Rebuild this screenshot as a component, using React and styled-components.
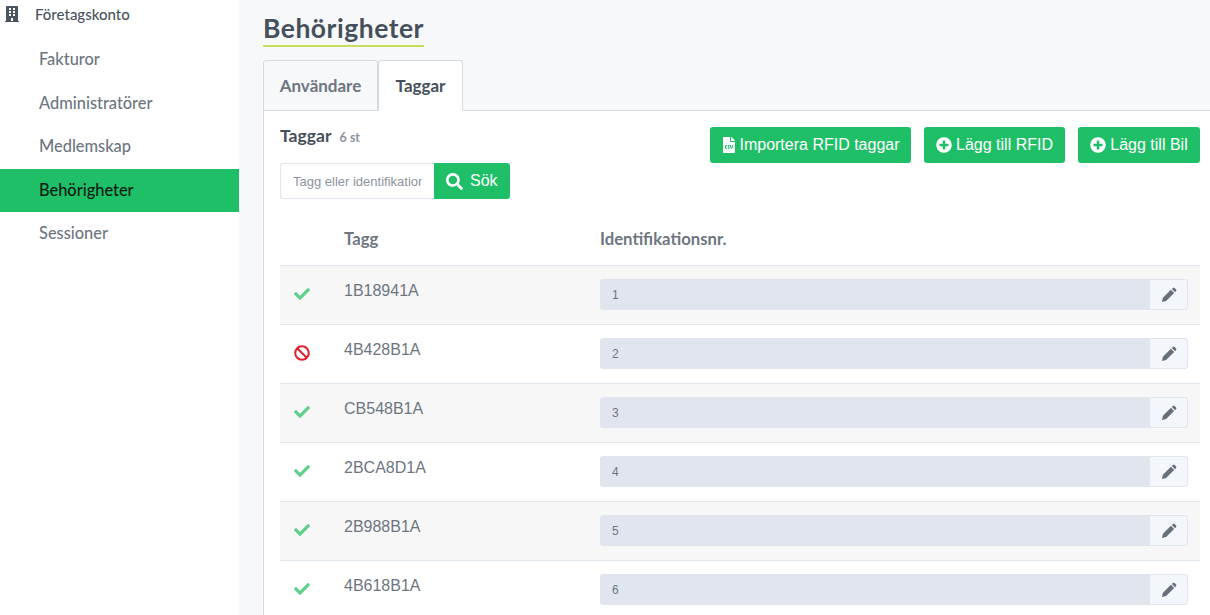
import React from 'react';
import styled, { createGlobalStyle } from 'styled-components';
import { FaBuilding, FaCheck, FaBan, FaSearch, FaPlusCircle, FaFileCsv } from 'react-icons/fa';

const GlobalStyle = createGlobalStyle`
  html, body {
    margin: 0;
    height: 615px;
    overflow: hidden;
    background: #f7f8f9;
    font-family: "Liberation Sans", Arial, sans-serif;
  }
  * { box-sizing: border-box; }
`;

const Page = styled.div`
  display: flex;
  height: 615px;
`;

const Sidebar = styled.nav`
  width: 239px;
  flex: none;
  background: #fff;
`;

const SideTitle = styled.div`
  display: flex;
  align-items: center;
  height: 28px;
  padding-left: 5px;
  font: 500 15px Lato, sans-serif;
  color: #4a5560;

  svg {
    width: 14px;
    height: 16px;
    margin-right: 16px;
    margin-top: -1px;
    color: #4a5560;
  }
`;

const SideList = styled.div`
  margin-top: 10px;
`;

const SideItem = styled.div`
  height: 43.5px;
  display: flex;
  align-items: center;
  padding: 0 0 2px 39px;
  font: 500 16.4px Lato, sans-serif;
  color: ${p => (p.$active ? '#0b1a12' : '#6d7680')};
  background: ${p => (p.$active ? '#1fbf68' : 'transparent')};
`;

const Main = styled.main`
  flex: 1;
  min-width: 0;
  padding: 14px 0 0 24px;
`;

const Title = styled.h1`
  display: inline-block;
  margin: 0;
  height: 33px;
  font: 700 26.5px/29px Lato, sans-serif;
  color: #46505c;
  letter-spacing: 0.5px;
  border-bottom: 2px solid #c8dd5c;
`;

const Tabs = styled.div`
  display: flex;
  margin-top: 13px;
  height: 51px;
  position: relative;
  z-index: 1;
`;

const Tab = styled.div`
  display: flex;
  align-items: center;
  justify-content: center;
  width: ${p => p.$width}px;
  height: 51px;
  font: 700 17px Lato, sans-serif;
  color: ${p => (p.$active ? '#46505c' : '#6d7680')};
  background: ${p => (p.$active ? '#fff' : '#f7f8f9')};
  border: 1px solid #d5dae2;
  border-bottom-color: ${p => (p.$active ? '#fff' : '#d5dae2')};
  border-radius: 3px 3px 0 0;
`;

const Panel = styled.section`
  margin-top: -1px;
  height: 510px;
  background: #fff;
  border: 1px solid #d5dae2;
  border-right: 0;
  padding: 0 10px 0 16px;
`;

const Top = styled.div`
  display: flex;
  justify-content: space-between;
  height: 104px;
`;

const SearchArea = styled.div`
  padding-top: 14px;
`;

const CountLine = styled.div`
  display: flex;
  align-items: baseline;
  height: 38px;
  font: 700 17.6px Lato, sans-serif;
  color: #46505c;
`;

const Count = styled.span`
  margin-left: 8px;
  font-size: 12.5px;
  color: #8b949e;
`;

const Search = styled.div`
  display: flex;
  height: 36px;
`;

const SearchInput = styled.input`
  width: 154px;
  height: 36px;
  padding: 0 12px;
  font: 13px "Liberation Sans", Arial, sans-serif;
  color: #6d7680;
  background: #fff;
  border: 1px solid #dfe5ec;
  border-right: 0;
  border-radius: 3px 0 0 3px;
  outline: none;

  &::placeholder {
    color: #8b949e;
    opacity: 1;
  }
`;

const SearchButton = styled.button`
  display: flex;
  align-items: center;
  gap: 7px;
  width: 76px;
  height: 36px;
  padding: 0 12px;
  font: 16px "Liberation Sans", Arial, sans-serif;
  color: #fff;
  background: #1fbf68;
  border: 0;
  border-radius: 0 3px 3px 0;

  svg {
    width: 17px;
    height: 17px;
  }
`;

const Actions = styled.div`
  display: flex;
  gap: 13px;
  padding-top: 16px;
`;

const ActionButton = styled.button`
  display: flex;
  align-items: center;
  justify-content: center;
  gap: ${p => p.$gap}px;
  width: ${p => p.$width}px;
  height: 36px;
  padding: 0;
  font: 16px "Liberation Sans", Arial, sans-serif;
  color: #fff;
  background: #1fbf68;
  border: 0;
  border-radius: 3px;

  svg {
    width: 16px;
    height: 16px;
  }
`;

const Table = styled.div`
  display: flex;
  flex-direction: column;
`;

const HeadRow = styled.div`
  display: grid;
  grid-template-columns: 64px 256px 1fr;
  height: 50px;
  font: 700 16.7px/48px Lato, sans-serif;
  color: #6d7680;
`;

const Row = styled.div`
  display: grid;
  grid-template-columns: 64px 256px 1fr;
  height: 59px;
  border-top: 1px solid #dfe5ec;
  background: ${p => (p.$odd ? '#f7f7f7' : '#fff')};
`;

const StatusCell = styled.div`
  display: flex;
  align-items: center;
  padding-left: 14px;
  padding-bottom: 3px;

  svg {
    width: 16px;
    height: 16px;
    color: ${p => (p.$blocked ? '#e0202c' : '#5fd08a')};
  }
`;

const TagCell = styled.div`
  padding-top: 16px;
  font-size: 16px;
  line-height: 18px;
  color: #6d7680;
`;

const IdCell = styled.div`
  display: flex;
  padding: 13px 12px 0 0;
`;

const IdValue = styled.div`
  flex: 1;
  height: 31px;
  padding-left: 12px;
  font-size: 12px;
  line-height: 32px;
  color: #6d7680;
  background: #e1e6ee;
  border-radius: 3px 0 0 3px;
`;

const EditButton = styled.button`
  display: flex;
  align-items: center;
  justify-content: center;
  width: 38px;
  height: 31px;
  padding: 0;
  color: #666f7a;
  background: #f3f6fa;
  border: 1px solid #e1e6ee;
  border-left: 0;
  border-radius: 0 3px 3px 0;

  svg {
    width: 16px;
    height: 16px;
  }
`;

const PencilIcon = () => (
  <svg viewBox="0 0 14 14" fill="currentColor">
    <path d="M.8 13.2 1.7 9.4 8.7 2.5 11.5 5.3 4.5 12.3Z" />
    <path d="M9.5 1.7 10.5.8a1 1 0 0 1 1.4 0L13.2 2.1a1 1 0 0 1 0 1.4L12.3 4.5Z" />
  </svg>
);

const sideItems = ['Fakturor', 'Administratörer', 'Medlemskap', 'Behörigheter', 'Sessioner'];

const tags = [
  { tag: '1B18941A', id: 1 },
  { tag: '4B428B1A', id: 2, blocked: true },
  { tag: 'CB548B1A', id: 3 },
  { tag: '2BCA8D1A', id: 4 },
  { tag: '2B988B1A', id: 5 },
  { tag: '4B618B1A', id: 6 },
];

export default function App() {
  return (
    <Page>
      <GlobalStyle />
      <Sidebar>
        <SideTitle><FaBuilding />Företagskonto</SideTitle>
        <SideList>
          {sideItems.map(item => (
            <SideItem key={item} $active={item === 'Behörigheter'}>{item}</SideItem>
          ))}
        </SideList>
      </Sidebar>
      <Main>
        <Title>Behörigheter</Title>
        <Tabs>
          <Tab $width={115}>Användare</Tab>
          <Tab $width={85} $active>Taggar</Tab>
        </Tabs>
        <Panel>
          <Top>
            <SearchArea>
              <CountLine>Taggar<Count>6 st</Count></CountLine>
              <Search>
                <SearchInput placeholder="Tagg eller identifikationsnr." />
                <SearchButton><FaSearch />Sök</SearchButton>
              </Search>
            </SearchArea>
            <Actions>
              <ActionButton $width={201} $gap={2}><FaFileCsv />Importera RFID taggar</ActionButton>
              <ActionButton $width={141} $gap={4}><FaPlusCircle />Lägg till RFID</ActionButton>
              <ActionButton $width={122} $gap={4}><FaPlusCircle />Lägg till Bil</ActionButton>
            </Actions>
          </Top>
          <Table>
            <HeadRow>
              <div />
              <div>Tagg</div>
              <div>Identifikationsnr.</div>
            </HeadRow>
            {tags.map((t, i) => (
              <Row key={t.tag} $odd={i % 2 === 0}>
                <StatusCell $blocked={t.blocked}>{t.blocked ? <FaBan /> : <FaCheck />}</StatusCell>
                <TagCell>{t.tag}</TagCell>
                <IdCell>
                  <IdValue>{t.id}</IdValue>
                  <EditButton><PencilIcon /></EditButton>
                </IdCell>
              </Row>
            ))}
          </Table>
        </Panel>
      </Main>
    </Page>
  );
}
